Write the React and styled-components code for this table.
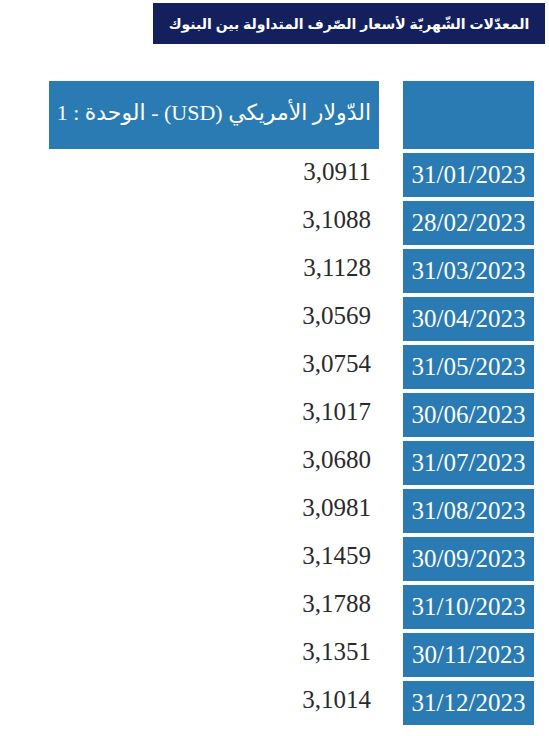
import React from 'react'
import styled, { createGlobalStyle } from 'styled-components'

const rates = [
  ['31/01/2023', '3,0911'],
  ['28/02/2023', '3,1088'],
  ['31/03/2023', '3,1128'],
  ['30/04/2023', '3,0569'],
  ['31/05/2023', '3,0754'],
  ['30/06/2023', '3,1017'],
  ['31/07/2023', '3,0680'],
  ['31/08/2023', '3,0981'],
  ['30/09/2023', '3,1459'],
  ['31/10/2023', '3,1788'],
  ['30/11/2023', '3,1351'],
  ['31/12/2023', '3,1014'],
]

const GlobalStyle = createGlobalStyle`
  html, body {
    margin: 0;
    padding: 0;
    background: #fff;
  }
`

const Page = styled.div`
  direction: rtl;
  width: 549px;
  padding: 3px 4px 0 0;
  box-sizing: border-box;
  font-family: "Liberation Serif", "DejaVu Serif", "DejaVu Sans", serif;
`

const Title = styled.h1`
  margin: 0;
  width: 392px;
  height: 41px;
  background: #141f5e;
  color: #fff;
  font-family: "Liberation Sans", "DejaVu Sans", sans-serif;
  font-size: 14px;
  font-weight: bold;
  white-space: nowrap;
  display: flex;
  align-items: center;
  justify-content: center;
`

const Table = styled.div`
  display: grid;
  grid-template-columns: 131px 330px;
  grid-auto-rows: 44px;
  grid-template-rows: 68px;
  column-gap: 24px;
  row-gap: 4px;
  margin: 37px 11px 0 0;
`

const DateCell = styled.div`
  background: #2a7bb3;
  color: #fff;
  font-size: 25px;
  display: flex;
  align-items: center;
  justify-content: center;
  direction: ltr;
`

const HeadCell = styled.div`
  background: #2a7bb3;
  color: #fff;
  font-size: 22px;
  white-space: nowrap;
  display: flex;
  align-items: center;
  padding: 0 8px 4px;
`

const ValueCell = styled.div`
  color: #2a2a2a;
  font-size: 25px;
  display: flex;
  align-items: center;
  padding: 0 8px 6px;
`

export default function App() {
  return (
    <>
      <GlobalStyle />
      <Page>
        <Title>المعدّلات الشّهريّة لأسعار الصّرف المتداولة بين البنوك</Title>
        <Table>
          <DateCell />
          <HeadCell>الدّولار الأمريكي (USD) - الوحدة : 1</HeadCell>
          {rates.map(([d, v]) => (
            <React.Fragment key={d}>
              <DateCell>{d}</DateCell>
              <ValueCell>{v}</ValueCell>
            </React.Fragment>
          ))}
        </Table>
      </Page>
    </>
  )
}
